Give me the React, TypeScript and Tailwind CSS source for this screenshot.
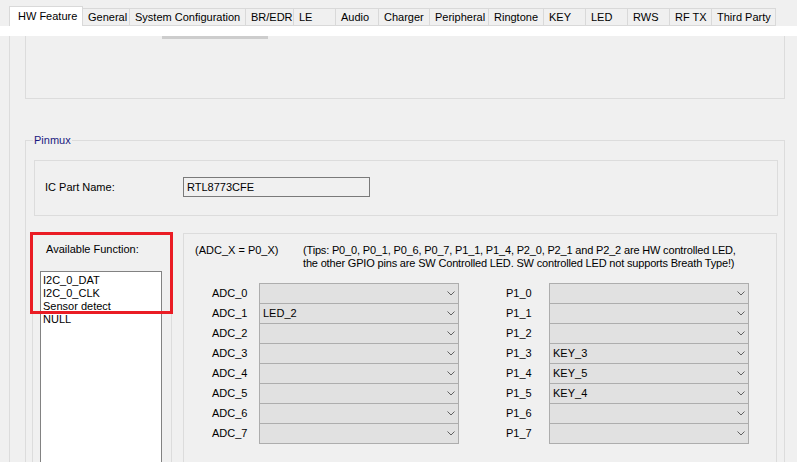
import React from "react";

const TABS: [string, string][] = [
  ["General", "w-[47px]"],
  ["System Configuration", "w-[116px]"],
  ["BR/EDR", "w-[48px]"],
  ["LE", "w-[42px]"],
  ["Audio", "w-[43px]"],
  ["Charger", "w-[51px]"],
  ["Peripheral", "w-[59px]"],
  ["Ringtone", "w-[55px]"],
  ["KEY", "w-[42px]"],
  ["LED", "w-[42px]"],
  ["RWS", "w-[42px]"],
  ["RF TX", "w-[42px]"],
  ["Third Party", "w-[64px]"],
];

const ROWS: [string, string, string, string][] = [
  ["ADC_0", "", "P1_0", ""],
  ["ADC_1", "LED_2", "P1_1", ""],
  ["ADC_2", "", "P1_2", ""],
  ["ADC_3", "", "P1_3", "KEY_3"],
  ["ADC_4", "", "P1_4", "KEY_5"],
  ["ADC_5", "", "P1_5", "KEY_4"],
  ["ADC_6", "", "P1_6", ""],
  ["ADC_7", "", "P1_7", ""],
];

const FUNCTIONS = ["I2C_0_DAT", "I2C_0_CLK", "Sensor detect", "NULL"];

const Chevron = () => (
  <svg width="8" height="5" viewBox="0 0 8 5" className="shrink-0">
    <polyline
      points="0.5,0.5 4,4 7.5,0.5"
      fill="none"
      stroke="#606060"
      strokeWidth="1"
    />
  </svg>
);

const Combo = ({ value, last }: { value: string; last: boolean }) => {
  return (
    <div
      className={
        last
          ? "w-[200px] h-[21px] border border-[#adadad] bg-[#e1e1e1] flex items-center justify-between pl-[3px] pr-[3px]"
          : "w-[200px] h-[20px] border-l border-r border-t border-[#adadad] bg-[#e1e1e1] flex items-center justify-between pl-[3px] pr-[3px]"
      }
    >
      <span className="whitespace-nowrap">{value}</span>
      <Chevron />
    </div>
  );
};

export default function App() {
  return (
    <div className="w-[797px] h-[462px] overflow-hidden bg-[#f0f0f0] text-[11px] leading-[13px] text-black font-['Liberation_Sans',Arial,sans-serif]">
      {/* tab strip */}
      <div className="h-[26px] flex items-end pl-[9px]">
        <div className="h-[20px] w-[74px] bg-white border-l border-t border-r border-[#d9d9d9] pl-[8px] pt-[3px] whitespace-nowrap">
          HW Feature
        </div>
        {TABS.map(([label, width]) => {
          return (
            <div
              key={label}
              className={`${width} h-[18px] border-t border-r border-b border-[#d9d9d9] bg-[#f0f0f0] pl-[5px] pt-[2px] overflow-hidden whitespace-nowrap`}
            >
              {label}
            </div>
          );
        })}
      </div>
      <div className="h-[10px] bg-white" />

      {/* tab page */}
      <div className="ml-[9px] border-l border-[#dcdcdc] pl-[15px] h-[430px]">
        <div className="w-[760px] h-[63px] border-l border-r border-b border-[#dcdcdc]">
          <div className="ml-[136px] w-[106px] h-[3px] bg-[#cdcdcd]" />
        </div>

        <div className="relative mt-[41px] w-[760px] h-[400px] border border-[#dcdcdc]">
          <span className="absolute left-[7px] -top-[7px] px-[1px] bg-[#f0f0f0] text-[#1a1a80]">
            Pinmux
          </span>

          <div className="ml-[8px] mt-[19px] w-[744px] h-[56px] border border-[#dcdcdc] flex items-start pt-[16px] pl-[10px]">
            <div className="w-[138px] h-[20px] flex items-center">
              IC Part Name:
            </div>
            <div className="w-[187px] h-[20px] border border-[#7a7a7a] bg-[#f0f0f0] pl-[3px] flex items-center">
              RTL8773CFE
            </div>
          </div>

          <div className="mt-[17px] ml-[6px] flex items-start">
            {/* available functions */}
            <div className="relative w-[140px] h-[260px] border border-[#dcdcdc]">
              <div className="pl-[13px] pt-[9px]">Available Function:</div>
              <div className="ml-[7px] mt-[15px] w-[122px] h-[200px] border border-[#828282] bg-white pt-[2px] pl-[2px]">
                {FUNCTIONS.map((item) => {
                  return (
                    <div key={item} className="whitespace-nowrap">
                      {item}
                    </div>
                  );
                })}
              </div>
              <div className="absolute -left-[3px] -top-[2px] w-[143px] h-[82px] border-[3px] border-[#ea1c24]" />
            </div>

            {/* pin assignment */}
            <div className="ml-[11px] w-[594px] h-[260px] border border-[#dcdcdc]">
              <div className="flex pl-[11px] pt-[10px]">
                <div className="w-[108px] whitespace-nowrap">(ADC_X = P0_X)</div>
                <div className="whitespace-nowrap tracking-[-0.17px]">
                  (Tips: P0_0, P0_1, P0_6, P0_7, P1_1, P1_4, P2_0, P2_1 and P2_2 are HW controlled LED,
                  <br />
                  the other GPIO pins are SW Controlled LED. SW controlled LED not supports Breath Type!)
                </div>
              </div>
              <div className="mt-[13px]">
                {ROWS.map(([adc, adcValue, pin, pinValue], index) => {
                  const last = index === ROWS.length - 1;
                  return (
                    <div key={adc} className="flex items-start pl-[28px]">
                      <div className="w-[47px] h-[20px] flex items-center">{adc}</div>
                      <Combo value={adcValue} last={last} />
                      <div className="ml-[47px] w-[43px] h-[20px] flex items-center">{pin}</div>
                      <Combo value={pinValue} last={last} />
                    </div>
                  );
                })}
              </div>
            </div>
          </div>
        </div>
      </div>
    </div>
  );
}
